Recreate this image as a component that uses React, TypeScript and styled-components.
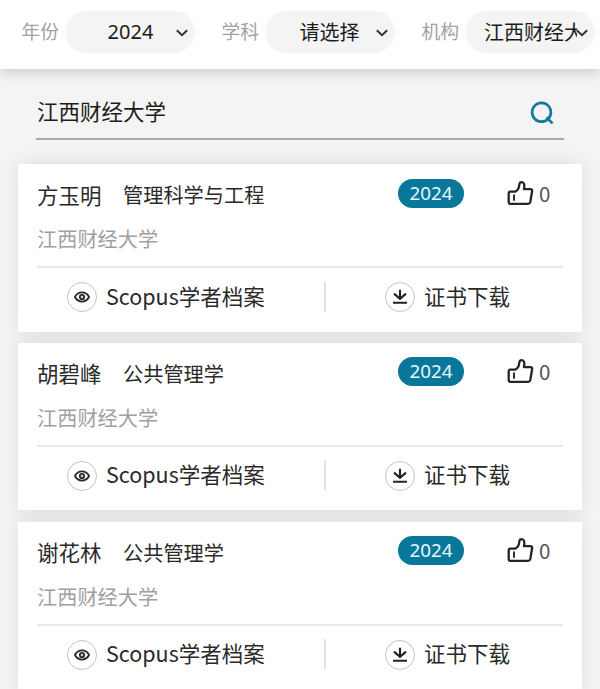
import React from "react";
import styled, { createGlobalStyle } from "styled-components";

const GlobalStyle = createGlobalStyle`
  * { box-sizing: border-box; }
  html, body { margin: 0; height: 100%; overflow: hidden; }
  body {
    background: #f4f4f4;
    color: #2a2a2a;
    font-family: "Noto Sans CJK SC", sans-serif;
  }
`;

const Page = styled.div`
  height: 689px;
  overflow: hidden;
`;

const FilterBar = styled.header`
  display: flex;
  height: 69px;
  padding: 11px 0 0 21.5px;
  background: #fff;
  box-shadow: 0 2px 14px rgba(0, 0, 0, 0.2);
`;

const Filter = styled.div`
  display: flex;
  flex: none;
  width: 200px;
  height: 42px;
  align-items: center;
`;

const FilterLabel = styled.span`
  width: 43.5px;
  color: #a2a2a2;
  font-size: 18.8px;
  line-height: 40px;
  height: 42px;
  white-space: nowrap;
`;

const Select = styled.div`
  display: flex;
  align-items: center;
  width: 130px;
  height: 42px;
  padding: 0 6px 0 19px;
  border-radius: 21px;
  background: #f4f4f4;
`;

const SelectValue = styled.span<{ $latin?: boolean }>`
  flex: none;
  width: 93px;
  height: 40px;
  margin-top: -1px;
  overflow: hidden;
  color: #1c1c1c;
  font-family: ${(p) => (p.$latin ? '"Noto Sans", ' : "")}"Noto Sans CJK SC", sans-serif;
  font-size: 20px;
  line-height: 39px;
  text-align: ${(p) => (p.$latin ? "center" : "inherit")};
  white-space: nowrap;
`;

const SelectText = styled(SelectValue)<{ $inset: number }>`
  padding-left: ${(p) => p.$inset}px;
`;

const Chevron = styled.svg`
  flex: none;
  width: 12px;
  height: 8px;
  margin: 1px 0 0 -1px;
`;

const SearchBox = styled.div`
  display: flex;
  justify-content: space-between;
  align-items: center;
  height: 55px;
  margin: 16px 36px 0;
  padding: 0 10px 0 1px;
  border-bottom: 2px solid #a9a9a9;
  color: #1c1c1c;
  font-size: 21.5px;
  line-height: 50px;

  svg { margin-top: 3px; }
  span { margin-top: -1px; }
`;

const List = styled.main`
  display: flex;
  flex-direction: column;
  gap: 11.3px;
  padding: 24px 18px 0;
`;

const Card = styled.article`
  height: 167.5px;
  padding: 0 19px;
  background: #fff;
  box-shadow: 0 0 18px rgba(0, 0, 0, 0.1);
`;

const Heading = styled.div`
  display: flex;
  align-items: center;
  height: 58px;
`;

const Name = styled.span`
  width: 86px;
  padding-top: 3px;
  font-size: 21.5px;
  line-height: 32px;
`;

const Field = styled.span`
  flex: 1;
  padding-top: 4px;
  font-size: 20.2px;
  line-height: 32px;
`;

const YearBadge = styled.span`
  width: 66px;
  height: 29px;
  margin-right: 42px;
  border-radius: 15px;
  background: #08779a;
  color: #e6f8ff;
  font-family: "Noto Sans", sans-serif;
  font-size: 18.8px;
  line-height: 28px;
  text-align: center;
`;

const Like = styled.span`
  display: flex;
  align-items: center;
  width: 57px;
  gap: 5px;
  padding-left: 1px;
  color: #555;
  font-size: 20.5px;
  line-height: 29px;

  svg { margin-top: -1px; }
`;

const School = styled.div`
  height: 46px;
  border-bottom: 2px solid #e9e9e9;
  color: #a0a0a0;
  font-size: 20.2px;
  line-height: 34px;
`;

const Actions = styled.div`
  display: flex;
  align-items: center;
  height: 58px;
`;

const Action = styled.div<{ $inset: number; $width: number }>`
  display: flex;
  align-items: center;
  gap: 9px;
  width: ${(p) => p.$width}px;
  padding-left: ${(p) => p.$inset}px;
  font-size: 21.5px;
  line-height: 32px;
  white-space: nowrap;
`;

const ActionLabel = styled.span`
  margin-top: -3px;
`;

const Divider = styled.div`
  width: 2px;
  height: 30px;
  margin-top: -1px;
  background: #e3e3e3;
`;

const IconRing = styled.span`
  display: flex;
  flex: none;
  align-items: center;
  justify-content: center;
  width: 30px;
  height: 30px;
  border: 1px solid #c2c2c2;
  border-radius: 50%;
`;

const Down = () => (
  <Chevron viewBox="0 0 12 8" fill="none" stroke="#303030" strokeWidth="1.9">
    <path d="M.8 1.2 6 6.2l5.2-5" />
  </Chevron>
);

const SearchIcon = () => (
  <svg width="24" height="24" viewBox="0 0 24 24" fill="none" stroke="#17799a" strokeWidth="2.7">
    <circle cx="11.5" cy="11.3" r="9.4" />
    <path d="m16.4 16.4 6.2 6" />
  </svg>
);

const ThumbIcon = () => (
  <svg width="27" height="26" viewBox="0 0 27 26" fill="none" stroke="#252525" strokeWidth="2.3" strokeLinejoin="round" strokeLinecap="round">
    <path d="M3.3 11.6h5c2.6-1.3 3.7-3.1 3.9-6.3.1-2.1 1-3.2 2.5-3.2 2.3 0 3.1 2.4 2.3 7h6.3c1.5 0 2.1.8 1.8 2.2L23.3 22c-.3 1.2-.9 1.8-2.1 1.8H3.3c-1 0-1.6-.6-1.6-1.6v-9c0-1 .6-1.6 1.6-1.6Z" />
    <path d="M7 15.2v4.8" strokeWidth="1.9" />
  </svg>
);

const EyeIcon = () => (
  <svg width="16" height="12" viewBox="0 0 16 12" fill="none" stroke="#292929" strokeWidth="1.8">
    <path d="M.9 6C4.3-.1 11.7-.1 15.1 6 11.7 12.1 4.3 12.1.9 6Z" />
    <circle cx="8" cy="6" r="2.2" />
    <circle cx="8" cy="6" r=".6" fill="#292929" stroke="none" />
  </svg>
);

const DownloadIcon = () => (
  <svg width="16" height="16" viewBox="0 0 16 16" fill="none" stroke="#222" strokeWidth="2.1">
    <path d="M8 .8v9M2 4.6l6 5.3 6-5.3M1 13.7h14" />
  </svg>
);

const scholars = [
  { name: "方玉明", field: "管理科学与工程" },
  { name: "胡碧峰", field: "公共管理学" },
  { name: "谢花林", field: "公共管理学" },
];

export default function App() {
  return (
    <Page>
      <GlobalStyle />
      <FilterBar>
        <Filter>
          <FilterLabel>年份</FilterLabel>
          <Select><SelectValue $latin>2024</SelectValue><Down /></Select>
        </Filter>
        <Filter>
          <FilterLabel>学科</FilterLabel>
          <Select><SelectText $inset={15.5}>请选择</SelectText><Down /></Select>
        </Filter>
        <Filter>
          <FilterLabel>机构</FilterLabel>
          <Select><SelectText $inset={0}>江西财经大学</SelectText><Down /></Select>
        </Filter>
      </FilterBar>
      <SearchBox><span>江西财经大学</span><SearchIcon /></SearchBox>
      <List>
        {scholars.map((s) => (
          <Card key={s.name}>
            <Heading>
              <Name>{s.name}</Name>
              <Field>{s.field}</Field>
              <YearBadge>2024</YearBadge>
              <Like><ThumbIcon /><span>0</span></Like>
            </Heading>
            <School>江西财经大学</School>
            <Actions>
              <Action $inset={30} $width={287}><IconRing><EyeIcon /></IconRing><ActionLabel>Scopus学者档案</ActionLabel></Action>
              <Divider />
              <Action $inset={59} $width={237}><IconRing><DownloadIcon /></IconRing><ActionLabel>证书下载</ActionLabel></Action>
            </Actions>
          </Card>
        ))}
      </List>
    </Page>
  );
}
